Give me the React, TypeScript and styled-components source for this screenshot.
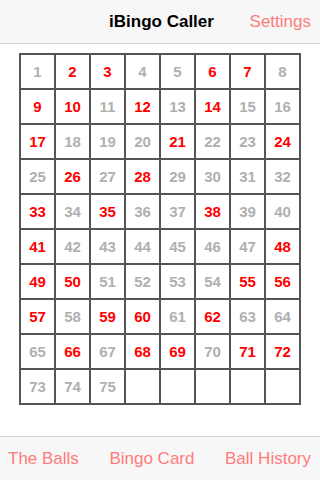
import React from 'react';
import styled, { createGlobalStyle } from 'styled-components';

const GlobalStyle = createGlobalStyle`
  html, body {
    margin: 0;
    padding: 0;
    background: #fff;
    font-family: 'Liberation Sans', Arial, sans-serif;
  }
`;

const CALLED = [
  2, 3, 6, 7, 9, 10, 12, 14, 17, 21, 24, 26, 28, 33, 35, 38, 41, 48, 49, 50,
  55, 56, 57, 59, 60, 62, 66, 68, 69, 71, 72,
];

const Screen = styled.div`
  width: 320px;
  height: 480px;
  display: flex;
  flex-direction: column;
  overflow: hidden;
`;

const NavBar = styled.div`
  height: 44px;
  flex-shrink: 0;
  background: #f7f7f7;
  border-bottom: 1px solid #d4d4d4;
  display: grid;
  grid-template-columns: 1fr auto 1fr;
  align-items: center;
  padding: 0 9px 0 8px;
  box-sizing: border-box;
`;

const Title = styled.div`
  font-size: 17px;
  font-weight: bold;
  color: #000;
  grid-column: 2;
  margin-left: 4px;
`;

const BarButton = styled.div`
  font-size: 17px;
  color: #ff7b7b;
  justify-self: end;
`;

const Main = styled.div`
  flex: 1;
  display: flex;
  justify-content: center;
  align-items: flex-start;
  padding-top: 9px;
`;

const Board = styled.div`
  display: grid;
  grid-template-columns: repeat(8, 33px);
  grid-auto-rows: 33px;
  gap: 2px;
  padding: 2px;
  background: #555;
`;

const Cell = styled.div<{ $called: boolean }>`
  background: #fff;
  display: flex;
  align-items: center;
  justify-content: center;
  font-size: 15px;
  font-weight: bold;
  color: ${(p) => (p.$called ? '#ff0000' : '#b0b0b0')};
`;

const TabBar = styled.div`
  height: 44px;
  flex-shrink: 0;
  background: #f7f7f7;
  border-top: 1px solid #d4d4d4;
  display: flex;
  align-items: center;
  justify-content: space-between;
  padding: 0 9px 0 8px;
  box-sizing: border-box;
`;

const Tab = styled.div`
  font-size: 17px;
  color: #ff7b7b;
`;

export default function App() {
  const cells = Array.from({ length: 80 }, (_, i) => i + 1);
  return (
    <Screen>
      <GlobalStyle />
      <NavBar>
        <Title>iBingo Caller</Title>
        <BarButton>Settings</BarButton>
      </NavBar>
      <Main>
        <Board>
          {cells.map((n) => (
            <Cell key={n} $called={CALLED.includes(n)}>
              {n <= 75 ? n : ''}
            </Cell>
          ))}
        </Board>
      </Main>
      <TabBar>
        <Tab>The Balls</Tab>
        <Tab>Bingo Card</Tab>
        <Tab>Ball History</Tab>
      </TabBar>
    </Screen>
  );
}
